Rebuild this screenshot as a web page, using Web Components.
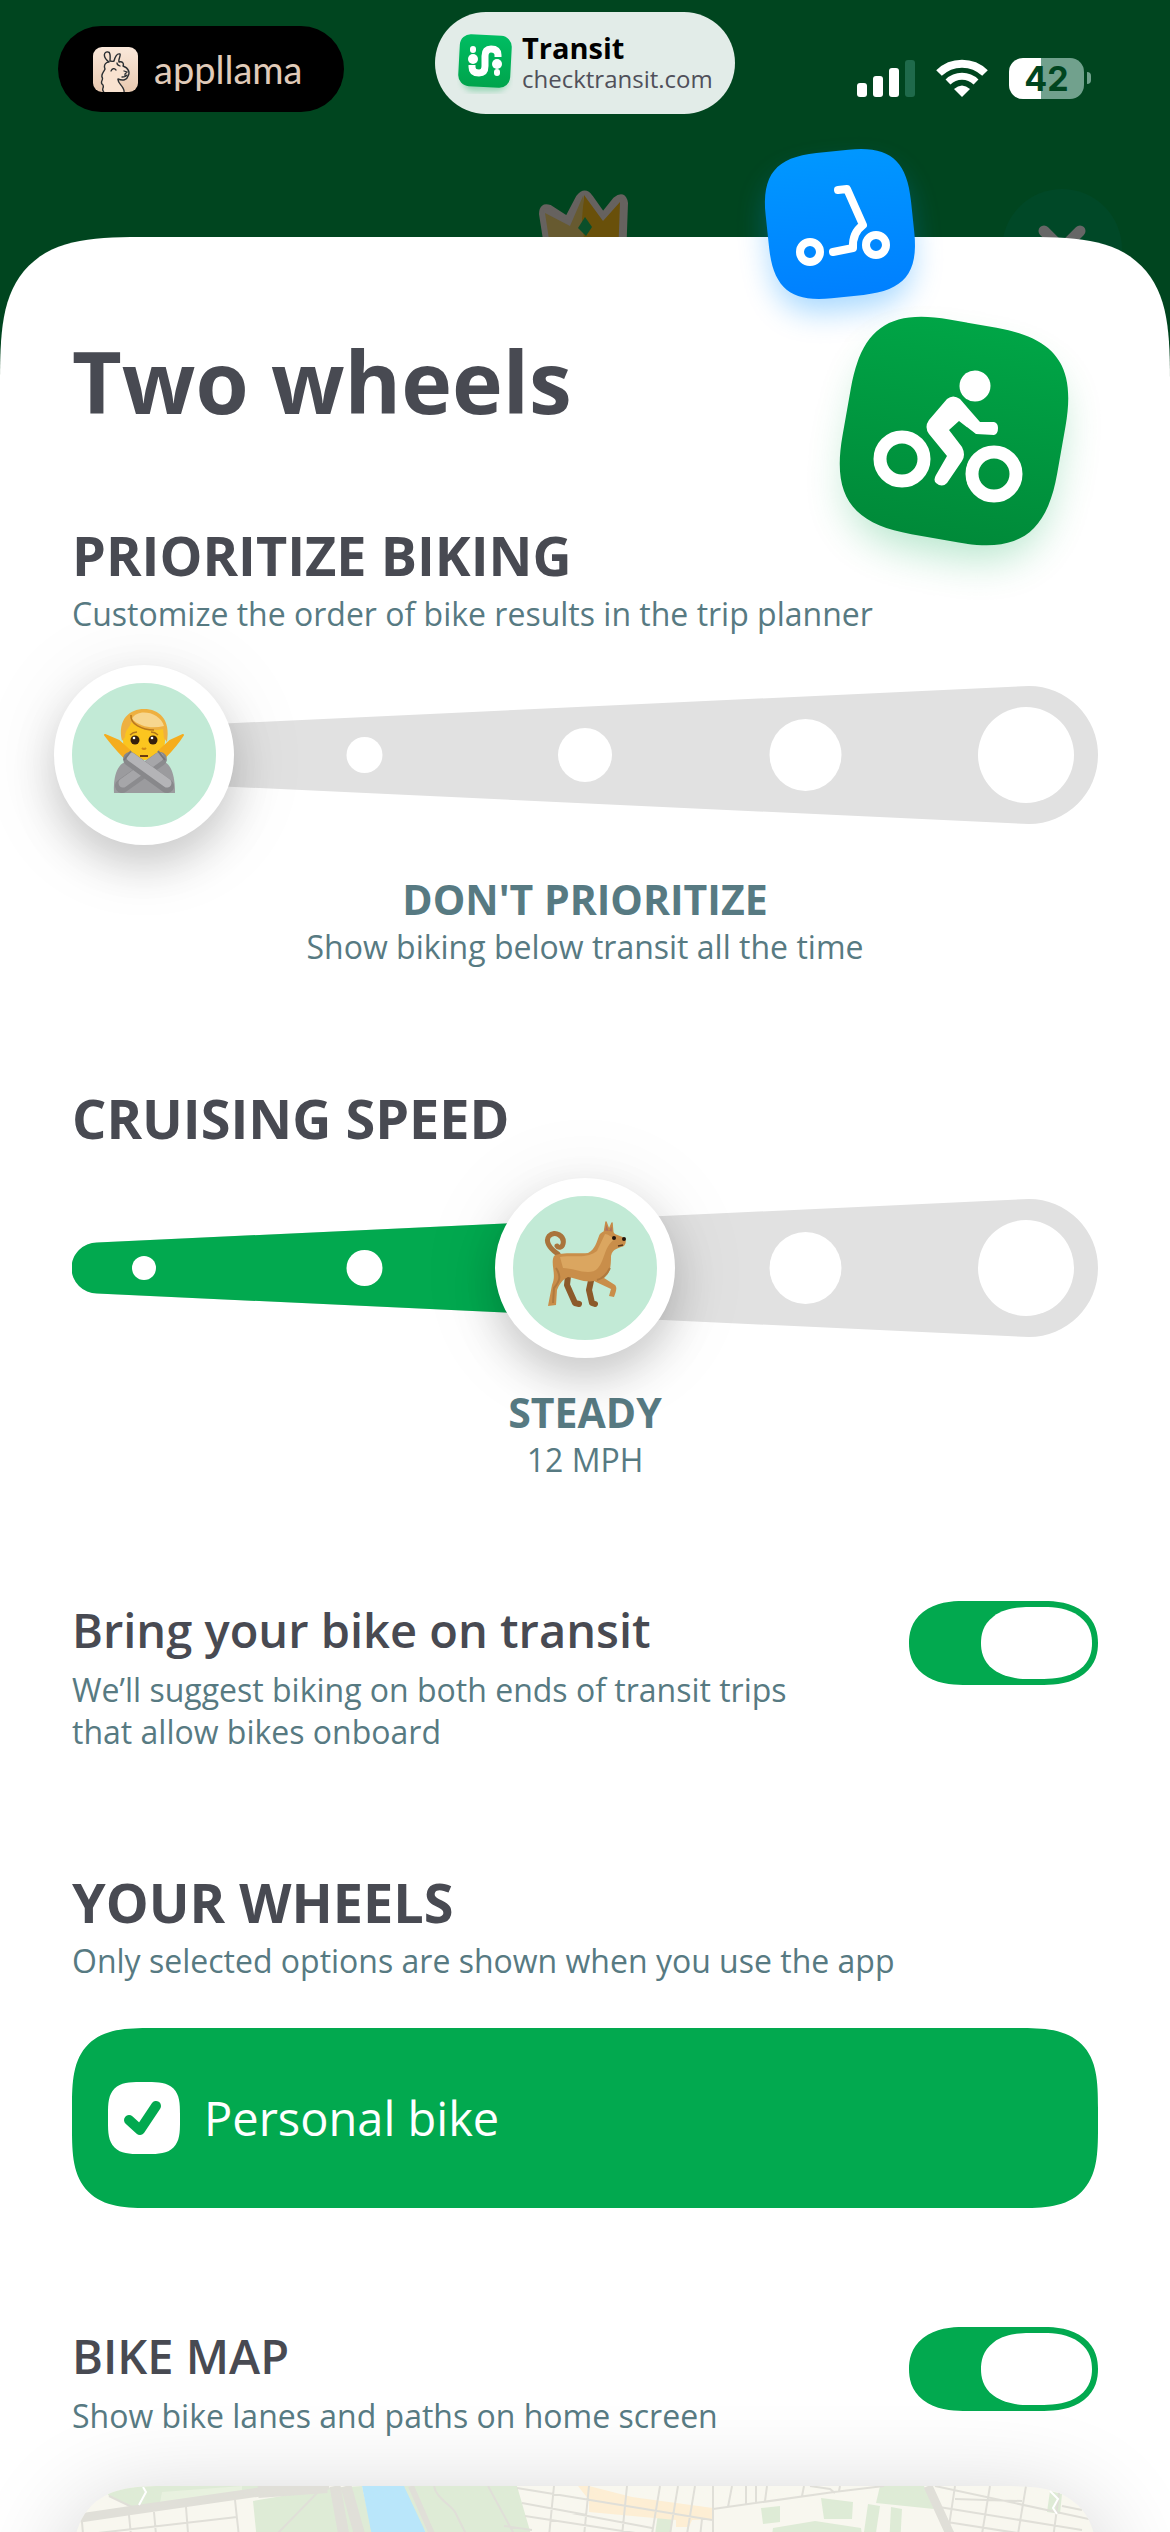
<!DOCTYPE html>
<html lang="en">
<head>
<meta charset="utf-8">
<meta name="viewport" content="width=device-width, initial-scale=1">
<title>Two wheels</title>
<style>
    body {
        margin: 0;
        background: #00451f;
        color: #484a52;
        font-family: "Open Sans", "Noto Sans", sans-serif;
        --green: #02a94f;
        --teal: #577a82;
        --mint: #c2ead6;
        --track: #e1e1e1;
    }
</style>
</head>
<body>
<app-screen>
    <status-bar slot="status"></status-bar>
    <mode-badges slot="badges"></mode-badges>

    <setting-group heading="PRIORITIZE BIKING" note="Customize the order of bike results in the trip planner">
        <wedge-slider value="0" name="Prioritize biking" icon="person" caption="DON'T PRIORITIZE" detail="Show biking below transit all the time"></wedge-slider>
    </setting-group>

    <setting-group heading="CRUISING SPEED">
        <wedge-slider value="2" name="Cruising speed" icon="dog" caption="STEADY" detail="12 MPH"></wedge-slider>
    </setting-group>

    <toggle-row heading="Bring your bike on transit" note="We’ll suggest biking on both ends of transit trips that allow bikes onboard"></toggle-row>

    <setting-group heading="YOUR WHEELS" note="Only selected options are shown when you use the app">
        <wheel-option>Personal bike</wheel-option>
    </setting-group>

    <div>
        <toggle-row heading="BIKE MAP" note="Show bike lanes and paths on home screen"></toggle-row>
        <bike-map></bike-map>
    </div>
</app-screen>

<script>
class BaseElement extends HTMLElement {
    constructor() {
        super()
        this.attachShadow({mode: "open"})
    }

    connectedCallback() {
        const template = document.createElement("template")
        template.innerHTML = this.render()
        this.shadowRoot.replaceChildren(template.content.cloneNode(true))
    }

    attr(name) {
        return this.getAttribute(name) || ""
    }
}

class AppScreen extends BaseElement {
    render() {
        return `
            <style>
                :host {
                    display: flex;
                    flex-direction: column;
                    position: relative;
                    height: 100vh;
                    overflow: hidden;
                }
                .backdrop {
                    flex: none;
                    display: grid;
                    grid-template-columns: 1fr auto 1fr;
                    align-items: start;
                    height: 48px;
                    padding: 0 48px;
                }
                .crown {
                    grid-column: 2;
                    display: block;
                }
                .close {
                    justify-self: end;
                    width: 120px;
                    height: 120px;
                    padding: 0;
                    border: 0;
                    border-radius: 50%;
                    background: #004827;
                }
                .sheet {
                    flex: 1;
                    min-height: 0;
                    position: relative;
                    overflow: hidden auto;
                    scrollbar-width: none;
                    background: #fff;
                    border-radius: 100px 100px 0 0;
                }
                @supports (corner-shape: squircle) {
                    .sheet {
                        border-radius: 150px 150px 0 0;
                        corner-shape: superellipse(1.7);
                    }
                }
                h1 {
                    margin: 0;
                    padding: 94px 72px;
                    font-size: 86px;
                    line-height: 100px;
                    font-weight: 700;
                }
                .settings {
                    display: flex;
                    flex-direction: column;
                    gap: 119px;
                    padding: 0 72px 72px;
                }
            </style>
            <slot name="status"></slot>
            <div class="backdrop">
                <svg class="crown" width="98" height="60" viewBox="0 0 98 60" aria-hidden="true">
                    <path d="M12 70L5 25Q5 15 14 18L31 29L42 8Q49 -1 55 8L67 25L79 10Q88 3 90 14L88 70Z" fill="#66625f" stroke="#66625f" stroke-width="4" stroke-linejoin="round"/>
                    <path d="M16 70L9 24L34 37L47 7L50 70Z" fill="#675a30"/>
                    <path d="M48 6L67 32L84 13L82 70H50L46 30Z" fill="#69500a"/>
                    <path d="M42 39L49 28L56 38L50 47Z" fill="#0b4f2a"/>
                </svg>
                <button class="close" aria-label="Close">
                    <svg width="120" height="120" viewBox="0 0 120 120">
                        <path d="M42 42L78 78M78 42L42 78" stroke="#666" stroke-width="11" stroke-linecap="round"/>
                    </svg>
                </button>
            </div>
            <main class="sheet">
                <h1>Two wheels</h1>
                <div class="settings"><slot></slot></div>
            </main>
            <slot name="badges"></slot>
        `
    }
}

class StatusBar extends BaseElement {
    render() {
        return `
            <style>
                :host {
                    flex: none;
                    display: grid;
                    grid-template-columns: 1fr auto 1fr;
                    align-items: start;
                    height: 189px;
                    padding: 12px 58px 0;
                    box-sizing: border-box;
                }
                .pill {
                    display: flex;
                    align-items: center;
                    box-sizing: border-box;
                    border-radius: 60px;
                    white-space: nowrap;
                }
                .llama {
                    justify-self: start;
                    gap: 16px;
                    height: 86px;
                    margin-top: 14px;
                    padding: 0 42px 0 35px;
                    background: #000;
                    color: #e0cbb9;
                    font: 400 38px/44px Lato, sans-serif;
                }
                .transit {
                    gap: 9px;
                    width: 300px;
                    height: 102px;
                    padding-left: 22px;
                    background: #e2ece8;
                    color: #50505a;
                    text-decoration: none;
                    font-size: 24px;
                    line-height: 30px;
                }
                .transit strong {
                    display: block;
                    color: #000;
                    font-size: 29px;
                    line-height: 32px;
                }
                .system {
                    justify-self: end;
                    display: flex;
                    align-items: center;
                    gap: 21px;
                    height: 42px;
                    margin: 45px 21px 0 0;
                }
                .battery {
                    display: flex;
                    align-items: center;
                    gap: 3px;
                }
                .level {
                    width: 75px;
                    border-radius: 14px;
                    background: linear-gradient(90deg, #fff 43%, #71a18d 43%);
                    color: #00451f;
                    text-align: center;
                    font: 700 34px/41px Inter, sans-serif;
                }
                .nub {
                    width: 4px;
                    height: 12px;
                    border-radius: 0 6px 6px 0;
                    background: #71a18d;
                }
                svg { display: block; flex: none; }
            </style>
            <div class="pill llama">
                <svg width="45" height="45" viewBox="0 0 45 45" aria-hidden="true">
                    <defs>
                        <linearGradient id="fur" x1="0" y1="0" x2="0" y2="1">
                            <stop offset="0" stop-color="#fae8da"/>
                            <stop offset="1" stop-color="#e9c9b0"/>
                        </linearGradient>
                    </defs>
                    <rect width="45" height="45" rx="9" fill="url(#fur)"/>
                    <path d="M11 45C7 42 13 40 9 37C7 34 11 33 9 30C8 27 11 25 12 22C10 17 14 15 16 15C9 10 11 4 15 5C18 5 17 12 17 14C20 14 19 15 21 14C22 10 24 6 27 7C28 9 25 12 26 15C30 14 31 17 30 19C36 21 37 26 35 29C34 33 30 34 25 32C24 36 32 40 31 45" fill="#f9e2d0" stroke="#2b2f33" stroke-width="1.4" stroke-linejoin="round"/>
                    <path d="M18 24Q20 20 23 23M27 19Q24 18 24 16M31 24L34 25L32 27V29M29 30Q33 30 34 28" fill="none" stroke="#2b2f33" stroke-width="1.3" stroke-linecap="round"/>
                </svg>
                <span>appllama</span>
            </div>
            <a class="pill transit" href="#transit">
                <svg width="56" height="62" viewBox="-28 -29 56 62" aria-hidden="true">
                    <defs>
                        <linearGradient id="leaf" x1="0" y1="0" x2="0" y2="1">
                            <stop offset="0" stop-color="#00bd62"/>
                            <stop offset="1" stop-color="#00a44c"/>
                        </linearGradient>
                        <filter id="soft" x="-30%" y="-30%" width="160%" height="160%"><feGaussianBlur stdDeviation="3"/></filter>
                    </defs>
                    <rect x="-23" y="-18" width="46" height="48" rx="12" fill="#02a94f" opacity=".35" filter="url(#soft)"/>
                    <rect x="-26" y="-26" width="52" height="52" rx="11" fill="url(#leaf)" transform="rotate(3)"/>
                    <g fill="none" stroke="#fff" stroke-width="7">
                        <path d="M13 -4V-6Q13 -12 6 -12Q0 -12 0 -5V5Q0 12 -6 12Q-13 12 -13 6V4"/>
                        <path d="M-12 -12V-11" stroke-width="6" stroke-linecap="round"/>
                        <path d="M12 11V12" stroke-width="6" stroke-linecap="round"/>
                    </g>
                    <circle cx="-12" cy="-2" r="5" fill="#fff"/>
                    <circle cx="12" cy="3" r="5" fill="#fff"/>
                </svg>
                <span><strong>Transit</strong>checktransit.com</span>
            </a>
            <div class="system">
                <svg width="58" height="38" viewBox="0 0 58 38" role="img" aria-label="Signal">
                    <g fill="#fff">
                        <rect y="24" width="10" height="14" rx="3"/>
                        <rect x="16" y="17" width="10" height="21" rx="3"/>
                        <rect x="32" y="9" width="10" height="29" rx="3"/>
                    </g>
                    <rect x="48" y="1" width="10" height="37" rx="3" fill="#1f6a4b"/>
                </svg>
                <svg width="52" height="38" viewBox="0 0 52 38" role="img" aria-label="Wi-Fi">
                    <g fill="none" stroke="#fff">
                        <path d="M3 14A33 33 0 0 1 49 14" stroke-width="8"/>
                        <path d="M12 23A20 20 0 0 1 40 23" stroke-width="7"/>
                    </g>
                    <path d="M18 30Q26 23 34 30L26 38Z" fill="#fff"/>
                </svg>
                <div class="battery"><div class="level">42</div><div class="nub"></div></div>
            </div>
        `
    }
}

class ModeBadges extends BaseElement {
    render() {
        return `
            <style>
                :host {
                    position: absolute;
                    top: 108px;
                    right: 60px;
                    pointer-events: none;
                }
                svg { display: block; overflow: visible; }
            </style>
            <svg width="384" height="480" viewBox="726 108 384 480" aria-hidden="true">
                <defs>
                    <linearGradient id="blue" x1="0" y1="0" x2="0" y2="1">
                        <stop offset="0" stop-color="#0097ff"/>
                        <stop offset="1" stop-color="#0080ff"/>
                    </linearGradient>
                    <linearGradient id="green" x1="0" y1="0" x2="0" y2="1">
                        <stop offset="0" stop-color="#00a546"/>
                        <stop offset="1" stop-color="#008a39"/>
                    </linearGradient>
                    <filter id="blur" x="-50%" y="-50%" width="200%" height="200%"><feGaussianBlur stdDeviation="22"/></filter>
                    <path id="tile" d="M-22 -100H22C78 -100 100 -78 100 -22V22C100 78 78 100 22 100H-22C-78 100 -100 78 -100 22V-22C-100 -78 -78 -100 -22 -100Z"/>
                </defs>
                <g transform="translate(840 224)">
                    <use href="#tile" transform="translate(0 16) rotate(-6) scale(.7)" fill="#0090ff" opacity=".35" filter="url(#blur)"/>
                    <use href="#tile" transform="rotate(-6) scale(.73)" fill="url(#blue)"/>
                    <g fill="none" stroke="#fff" stroke-width="8">
                        <circle cx="-30" cy="28" r="10"/>
                        <circle cx="36" cy="21" r="10"/>
                        <path d="M-2 -34L7 -35L23 1Q12 9 13 24L-7 28" stroke-linecap="round" stroke-linejoin="round"/>
                    </g>
                </g>
                <g transform="translate(954 431)">
                    <use href="#tile" transform="translate(0 22) rotate(10)" fill="#02a94f" opacity=".3" filter="url(#blur)"/>
                    <use href="#tile" transform="rotate(10) scale(1.09)" fill="url(#green)"/>
                    <g fill="none" stroke="#fff" stroke-width="13">
                        <circle cx="-52" cy="28" r="22"/>
                        <circle cx="40" cy="43" r="22"/>
                    </g>
                    <circle cx="21" cy="-45" r="15.500" fill="#fff"/>
                    <path d="M-7 -32Q-1 -37 6 -32L26 -9H40Q44 -8 44 -3Q44 3 40 4L22 3L5 -10L-5 -1L8 16Q12 24 8 30L-7 52Q-12 57 -18 52Q-21 49 -18 44L-7 25L-25 3Q-30 -4 -25 -11Z" fill="#fff"/>
                </g>
            </svg>
        `
    }
}

class SettingGroup extends BaseElement {
    render() {
        const note = this.attr("note") ? `<p>${this.attr("note")}</p>` : ""
        return `
            <style>
                :host { display: block; }
                h2, p { margin: 0; }
                h2 {
                    font-size: 54px;
                    line-height: 60px;
                    font-weight: 700;
                }
                p {
                    margin-top: 8px;
                    color: var(--teal);
                    font-size: 32px;
                    line-height: 42px;
                }
            </style>
            <h2>${this.attr("heading")}</h2>
            ${note}
            <slot></slot>
        `
    }
}

const FACES = {
    person: `
        <path d="M-30 38C-31 20 -26 6 -14 6H16C27 6 31 20 31 38Z" fill="#9b9b9e"/>
        <path d="M-21 -18C-22 -42 22 -42 21 -18C22 -2 12 5 0 5S-22 -2 -21 -18Z" fill="#fbc51f"/>
        <path d="M-22 -14C-27 -36 -14 -46 0 -46C15 -46 27 -36 23 -13L20 -17L19 -26C8 -23 -4 -25 -13 -33C-13 -28 -19 -26 -19 -18Z" fill="#eeb040"/>
        <path d="M-12 -36C-8 -47 16 -44 20 -29C8 -26 -4 -28 -12 -36Z" fill="#f7d68e"/>
        <path d="M-13 -40C-14 -31 -2 -25 10 -25" fill="none" stroke="#b9781b" stroke-width="1.500"/>
        <g fill="#35200d"><circle cx="-9" cy="-15" r="4.500"/><circle cx="9" cy="-15" r="4.500"/></g>
        <g fill="#fff"><circle cx="-10" cy="-17" r="1.300"/><circle cx="8" cy="-17" r="1.300"/></g>
        <path d="M-14 -20Q-11 -23 -7 -23M14 -20Q11 -23 7 -23" stroke="#b0761c" stroke-width="1.300" fill="none"/>
        <path d="M-2 -7Q0 -5 2 -7" stroke="#d28b17" stroke-width="2" fill="none"/>
        <path d="M-4 1H4" stroke="#6b3b12" stroke-width="2"/>
        <path d="M-39 -20L-25 -14L-14 -4L-19 3C-26 -4 -33 -12 -39 -20Z" fill="#f5ad1d" stroke="#f5ad1d" stroke-width="2" stroke-linejoin="round"/>
        <path d="M39 -20L26 -14L15 -4L20 3C27 -4 34 -12 39 -20Z" fill="#f5ad1d" stroke="#f5ad1d" stroke-width="2" stroke-linejoin="round"/>
        <path d="M16 4L-22 31" stroke="#8b8b8e" stroke-width="14" stroke-linecap="round"/>
        <path d="M15 2L-21 28" stroke="#a6a6a9" stroke-width="9" stroke-linecap="round"/>
        <path d="M-14 4L23 31" stroke="#88888b" stroke-width="14" stroke-linecap="round"/>
        <path d="M-13 2L23 28" stroke="#b4b4b7" stroke-width="9" stroke-linecap="round"/>
        <path d="M-20 5L-13 -4M21 5L14 -4" stroke="#77777b" stroke-width="2"/>`,
    dog: `
        <path d="M-17 8L-18 17L-10 35L-6 36M7 8L4 22L7 35L10 36" fill="none" stroke="#8c5a2a" stroke-width="6" stroke-linejoin="round" stroke-linecap="round"/>
        <path d="M-27 -14C-36 -20 -40 -27 -36 -32C-30 -38 -20 -32 -22 -24C-23 -20 -27 -20 -28 -22" fill="none" stroke="#a9743c" stroke-width="5" stroke-linecap="round"/>
        <path d="M19 -34L21 -46L24 -38L27 -45L28 -33Z" fill="#b0705a" stroke="#c68a48" stroke-width="1.500" stroke-linejoin="round"/>
        <path d="M-31 -12C-26 -16 -8 -14 3 -15C10 -18 12 -27 14 -32C17 -39 27 -38 30 -34L40 -30C42 -26 40 -21 36 -21C30 -19 27 -17 26 -12C26 0 25 5 19 10L30 17C33 20 30 26 29 29L24 28L26 21L9 13C0 15 -10 10 -17 9C-23 12 -26 17 -28 22L-29 37L-37 38L-33 17C-28 6 -35 -4 -31 -12Z" fill="#c98e4a"/>
        <path d="M-25 -11C-12 -13 2 -9 12 -17L20 -34C23 -34 26 -31 30 -29C19 -22 20 -8 13 0C5 9 -10 0 -22 0Z" fill="#dba660"/>
        <path d="M-29 0C-23 9 -26 14 -31 20L-32 35M12 12Q20 10 25 0" fill="none" stroke="#b07a3e" stroke-width="2"/>
        <circle cx="29" cy="-30" r="2" fill="#20140c"/>
        <circle cx="39" cy="-29" r="2" fill="#20140c"/>
        <path d="M33 -22L38 -23" stroke="#5a3619" stroke-width="1.500"/>`
}

class WedgeSlider extends BaseElement {
    render() {
        const value = Number(this.attr("value"))
        const dots = [12, 18, 27, 36, 48].map((r, i) => `<circle cx="${72 + i * 220.5}" cy="69" r="${r}" fill="#fff"/>`).join("")
        const wedge = "M25 43.500L957 0A69 69 0 0 1 957 138L25 94.500A25.500 25.500 0 0 1 25 43.500Z"
        return `
            <style>
                :host {
                    display: block;
                    margin-top: 30px;
                    text-align: center;
                    color: var(--teal);
                    --at: ${value / 4};
                }
                .rail {
                    display: grid;
                    align-items: center;
                    position: relative;
                    height: 180px;
                    margin-bottom: 28px;
                }
                .rail > * { grid-area: 1 / 1; }
                .track {
                    display: block;
                    width: 100%;
                }
                input {
                    appearance: none;
                    height: 180px;
                    margin: 0 -18px;
                    background: none;
                }
                input::-webkit-slider-thumb {
                    appearance: none;
                    box-sizing: border-box;
                    width: 180px;
                    height: 180px;
                    border: 18px solid #fff;
                    border-radius: 50%;
                    background: var(--mint);
                    box-shadow: 0 20px 44px rgba(0, 0, 0, .18), 0 6px 90px rgba(0, 0, 0, .08);
                }
                .face {
                    position: absolute;
                    left: calc((100% - 144px) * var(--at));
                    width: 144px;
                    height: 144px;
                    pointer-events: none;
                }
                output { display: block; }
                strong, span {
                    display: block;
                }
                strong {
                    font-size: 41px;
                    line-height: 52px;
                    font-weight: 700;
                }
                span {
                    font-size: 32px;
                    line-height: 44px;
                }
            </style>
            <div class="rail">
                <svg class="track" viewBox="0 0 1026 138" aria-hidden="true">
                    <defs><clipPath id="done"><rect width="${72 + value * 220.5}" height="138"/></clipPath></defs>
                    <path d="${wedge}" fill="var(--track)"/>
                    <path d="${wedge}" fill="var(--green)" clip-path="url(#done)"/>
                    ${dots}
                </svg>
                <input id="range" type="range" min="0" max="4" value="${value}" aria-label="${this.attr("name")}">
                <svg class="face" viewBox="-72 -72 144 144" aria-hidden="true">${FACES[this.attr("icon")]}</svg>
            </div>
            <output for="range">
                <strong>${this.attr("caption")}</strong>
                <span>${this.attr("detail")}</span>
            </output>
        `
    }
}

class ToggleRow extends BaseElement {
    render() {
        return `
            <style>
                :host {
                    display: flex;
                    align-items: flex-start;
                    justify-content: space-between;
                    gap: 90px;
                }
                label {
                    display: block;
                    font-size: 47px;
                    line-height: 58px;
                    font-weight: 600;
                }
                p {
                    margin: 10px 0 0;
                    color: var(--teal);
                    font-size: 32px;
                    line-height: 42px;
                }
                input {
                    appearance: none;
                    flex: none;
                    display: flex;
                    width: 189px;
                    height: 84px;
                    margin: 0;
                    padding: 6px;
                    box-sizing: border-box;
                    border-radius: 42px;
                    background: var(--track);
                }
                input::before {
                    content: "";
                    width: 111px;
                    border-radius: 36px;
                    background: #fff;
                }
                input:checked {
                    justify-content: flex-end;
                    background: var(--green);
                }
                @supports (corner-shape: squircle) {
                    input {
                        border-radius: 54px / 42px;
                        corner-shape: superellipse(1.2);
                    }
                    input::before {
                        border-radius: 48px / 36px;
                        corner-shape: superellipse(1.2);
                    }
                }
            </style>
            <div>
                <label for="switch">${this.attr("heading")}</label>
                <p id="note">${this.attr("note")}</p>
            </div>
            <input id="switch" type="checkbox" role="switch" aria-describedby="note" checked>
        `
    }
}

class WheelOption extends BaseElement {
    render() {
        return `
            <style>
                :host { display: block; margin-top: 46px; }
                label {
                    display: flex;
                    align-items: center;
                    gap: 24px;
                    height: 180px;
                    padding: 0 36px;
                    border-radius: 56px;
                    background: var(--green);
                    color: #fff;
                    font-size: 47px;
                    line-height: 58px;
                }
                .box {
                    display: grid;
                    width: 72px;
                    height: 72px;
                }
                .box > * { grid-area: 1 / 1; }
                input {
                    appearance: none;
                    margin: 0;
                    border-radius: 22px;
                    background: #fff;
                }
                @supports (corner-shape: squircle) {
                    label { border-radius: 80px; corner-shape: superellipse(1.6); }
                    input { border-radius: 32px; corner-shape: superellipse(1.6); }
                }
                svg { position: relative; pointer-events: none; }
                input:not(:checked) + svg { visibility: hidden; }
            </style>
            <label>
                <span class="box">
                    <input type="checkbox" checked>
                    <svg viewBox="0 0 72 72" fill="none" aria-hidden="true">
                        <path d="M21 38L32 48L48 24" stroke="var(--green)" stroke-width="10" stroke-linecap="round" stroke-linejoin="round"/>
                    </svg>
                </span>
                <slot></slot>
            </label>
        `
    }
}

class BikeMap extends BaseElement {
    render() {
        return `
            <style>
                :host {
                    display: block;
                    height: 420px;
                    margin-top: 49px;
                    overflow: hidden;
                    border-radius: 72px;
                    background: #f8f7ef;
                    box-shadow: 0 20px 100px rgba(0, 0, 0, .22);
                }
                @supports (corner-shape: squircle) {
                    :host { border-radius: 96px; corner-shape: superellipse(1.6); }
                }
                svg { display: block; width: 100%; }
            </style>
            <svg viewBox="0 0 1026 420" role="img" aria-label="Map of bike lanes">
                <g fill="#deebd6">
                    <path d="M30 0H196L181 5L62 22L37 10Z"/>
                    <path d="M181 15L257 2L290 0L310 90L330 420H150L184 45Z"/>
                    <path d="M325 0H445L458 45L520 420H420L353 45Z"/>
                    <path d="M689 22L708 20V36L691 38Z"/>
                    <path d="M749 12L781 16L780 33H752Z"/>
                    <path d="M808 0H852L862 23L804 17Z"/>
                    <path d="M796 18L808 20L802 60H790Z"/>
                    <path d="M819 21L830 23L828 60H817Z"/>
                    <path d="M701 42L743 35L789 42L800 120H690Z"/>
                    <path d="M978 5L990 8L988 28L975 26Z"/>
                    <path d="M586 27L600 30L598 70H580Z"/>
                </g>
                <path d="M90 6L170 0V7L88 17Z" fill="#e8f1df"/>
                <path d="M506 0H517L560 11L641 22V33L620 34L617 41H604V34L517 26V14Z" fill="#fdeed4"/>
                <path d="M290 0H332L353 45L420 420H360L299 45Z" fill="#b9e6fa"/>
                <g fill="none" stroke="#e0dfd8">
                    <path d="M8 32L62 24L188 6L257 -1" stroke-width="9"/>
                    <path d="M186 4L255 -1" stroke-width="16"/>
                    <path d="M263 0L272 50L330 420M274 0L288 50L350 420" stroke-width="11"/>
                    <path d="M339 0L360 48L430 420" stroke-width="6"/>
                    <path d="M856 0L878 48L1026 300" stroke-width="9"/>
                    <path stroke-width="2" d="M37 10L62 22M10 36L12 60M57 29L60 60M82 26L85 60M114 21L117 60M163 14L168 60M0 50L165 31M249 3L205 48M362 0C364 12 378 18 383 26L395 50M416 0L442 48M432 40L460 44"/>
                    <path stroke-width="2" d="M445 2L640 34M450 17L515 29M453 30L570 48M500 27L580 42M482 0L476 60M517 0L511 60M555 0L549 60M588 0L578 60M606 0L596 60M623 0L613 60M641 0V60M630 33L627 60M641 23L762 6L812 0M660 0L656 21M674 0V18M684 0V17M695 0L693 15M732 0L730 10M738 0L758 3L763 7M768 0L767 5"/>
                    <path stroke-width="2" d="M863 0L1026 35M883 13L950 15M867 21L1010 44M875 36L990 54M883 0L874 60M918 0L908 60M954 0L944 60M988 0L980 60M990 20L1010 24"/>
                </g>
                <path d="M71 1L74 6L67 19M978 5L986 13L981 22L985 28" fill="none" stroke="#fff" stroke-width="2"/>
            </svg>
        `
    }
}

customElements.define("app-screen", AppScreen)
customElements.define("status-bar", StatusBar)
customElements.define("mode-badges", ModeBadges)
customElements.define("setting-group", SettingGroup)
customElements.define("wedge-slider", WedgeSlider)
customElements.define("toggle-row", ToggleRow)
customElements.define("wheel-option", WheelOption)
customElements.define("bike-map", BikeMap)
</script>
</body>
</html>
